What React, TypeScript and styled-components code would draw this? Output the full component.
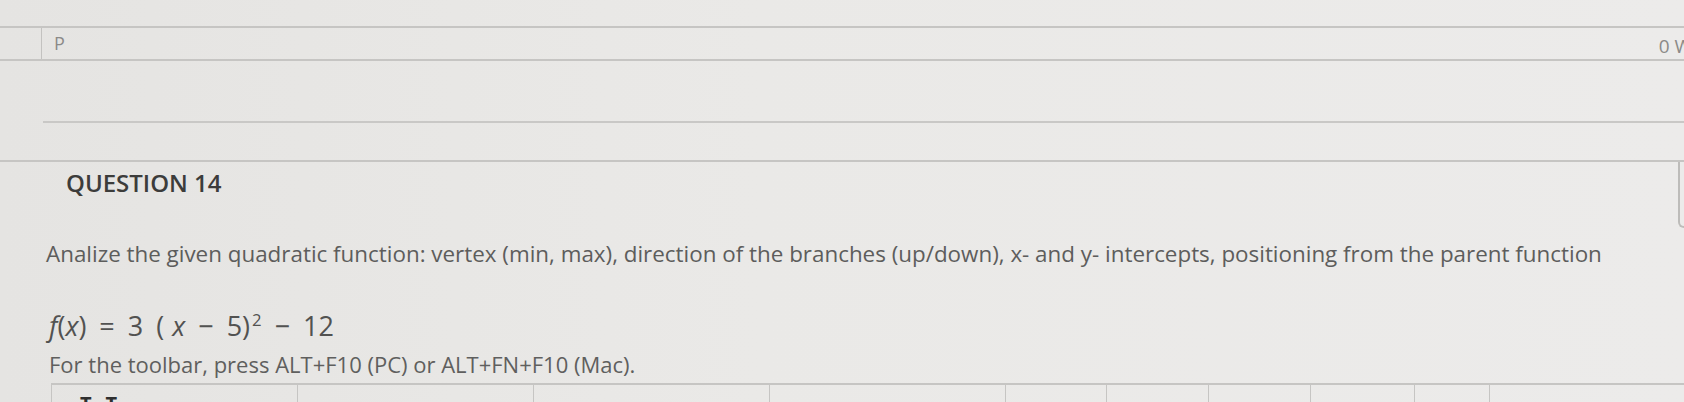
import React from 'react';
import styled, { createGlobalStyle } from 'styled-components';

const GlobalStyle = createGlobalStyle`
  html, body {
    margin: 0;
    padding: 0;
    width: 1684px;
    height: 402px;
    overflow: hidden;
    background: #e9e8e6;
  }
`;

const Page = styled.div`
  width: 1684px;
  height: 402px;
  overflow: hidden;
  padding-top: 26px;
  box-sizing: border-box;
  font-family: 'Open Sans', 'Noto Sans', sans-serif;
  background: linear-gradient(90deg, #e5e4e2 0%, #eae9e7 45%, #ecebea 100%);
`;

const TopBar = styled.div`
  display: flex;
  justify-content: space-between;
  align-items: stretch;
  height: 31px;
  border-top: 2px solid #c6c5c3;
  border-bottom: 2px solid #c6c5c3;
`;

const PageBox = styled.div`
  margin-left: 41px;
  padding: 2px 0 0 12px;
  border-left: 1px solid #c3c2c0;
  font-size: 18px;
  line-height: 26px;
  color: #8b8a88;
`;

const Status = styled.div`
  padding-top: 5px;
  margin-right: -8px;
  font-size: 19px;
  line-height: 26px;
  white-space: nowrap;
  color: #8b8a88;
`;

const Spacer = styled.div`
  margin-left: 43px;
  height: 60px;
  border-bottom: 2px solid #c9c8c6;
`;

const Card = styled.section`
  margin-top: 37px;
  border-top: 2px solid #c6c5c3;
`;

const HeaderRow = styled.div`
  display: flex;
  justify-content: space-between;
  align-items: flex-start;
  height: 37px;
`;

const Title = styled.h2`
  margin: 0;
  padding: 5px 0 0 66px;
  font-size: 24px;
  line-height: 32px;
  font-weight: 600;
  color: #3c3c3b;
`;

const PointsBox = styled.div`
  flex: 0 0 20px;
  height: 66px;
  margin-right: -14px;
  border-left: 2px solid #bdbcba;
  border-bottom: 2px solid #bdbcba;
  border-bottom-left-radius: 6px;
  box-sizing: border-box;
`;

const Body = styled.div`
  padding-left: 46px;
`;

const Prompt = styled.p`
  margin: 40px 0 0;
  font-size: 22.4px;
  line-height: 30px;
  color: #5d5d5c;
  white-space: nowrap;
`;

const Formula = styled.div`
  display: flex;
  align-items: baseline;
  gap: 13px;
  margin: 40px 0 0 3px;
  font-size: 27px;
  line-height: 34px;
  color: #525251;
  white-space: nowrap;
`;

const Token = styled.span<{ $tight?: boolean }>`
  margin-right: ${({ $tight }) => ($tight ? '-5px' : '0')};
`;

const Var = styled.i`
  font-style: italic;
`;

const Sup = styled.sup`
  font-size: 0.62em;
  line-height: 0;
  margin-left: 2px;
`;

const Hint = styled.p`
  margin: 6px 0 0 3px;
  font-size: 22px;
  line-height: 30px;
  color: #5f5f5e;
  white-space: nowrap;
`;

const Toolbar = styled.div`
  display: flex;
  margin: 4px 0 0 51px;
  height: 40px;
  border-top: 2px solid #c6c5c3;
  border-left: 1px solid #c6c5c3;
`;

const Cell = styled.div<{ $w?: number }>`
  flex: ${({ $w }) => ($w ? `0 0 ${$w}px` : '1 1 auto')};
  box-sizing: border-box;
  border-right: ${({ $w }) => ($w ? '1px solid #c6c5c3' : 'none')};
  display: flex;
  gap: 14px;
  padding: 9px 0 0 28px;
`;

const FormatBtn = styled.span`
  font-size: 20px;
  line-height: 20px;
  font-weight: 700;
  color: #2f2f2f;
`;

const cellWidths = [246, 236, 236, 236, 101, 102, 102, 104, 75];

export default function App() {
  return (
    <>
      <GlobalStyle />
      <Page>
        <TopBar>
          <PageBox>P</PageBox>
          <Status>0 W</Status>
        </TopBar>
        <Spacer />
        <Card>
          <HeaderRow>
            <Title>QUESTION 14</Title>
            <PointsBox />
          </HeaderRow>
          <Body>
            <Prompt>
              Analize the given quadratic function: vertex (min, max), direction of the branches (up/down), x- and y- intercepts, positioning from the parent function
            </Prompt>
            <Formula>
              <Token>
                <Var>f</Var>(<Var>x</Var>)
              </Token>
              <Token>=</Token>
              <Token>3</Token>
              <Token $tight>(</Token>
              <Token>
                <Var>x</Var>
              </Token>
              <Token>−</Token>
              <Token>
                5)<Sup>2</Sup>
              </Token>
              <Token>−</Token>
              <Token>12</Token>
            </Formula>
            <Hint>For the toolbar, press ALT+F10 (PC) or ALT+FN+F10 (Mac).</Hint>
          </Body>
          <Toolbar>
            {cellWidths.map((w, i) => (
              <Cell key={i} $w={w}>
                {i === 0 && (
                  <>
                    <FormatBtn>T</FormatBtn>
                    <FormatBtn>T</FormatBtn>
                  </>
                )}
              </Cell>
            ))}
            <Cell />
          </Toolbar>
        </Card>
      </Page>
    </>
  );
}
